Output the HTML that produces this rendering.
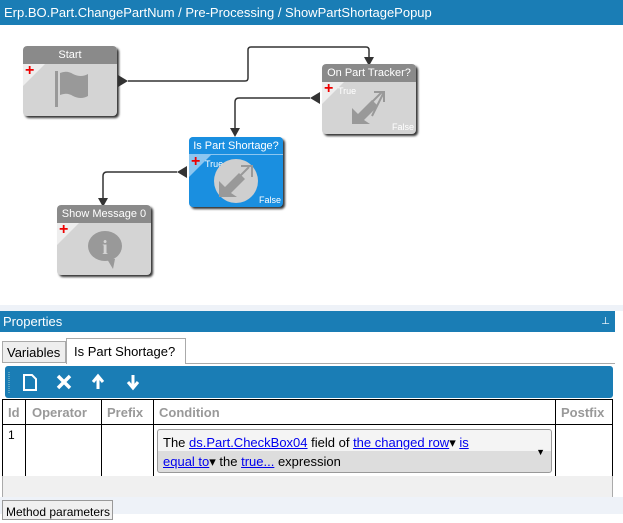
<!DOCTYPE html>
<html><head><style>
*{margin:0;padding:0;box-sizing:border-box}
body{width:623px;height:514px;overflow:hidden;background:#fff;font-family:"Liberation Sans",sans-serif;position:relative}
.abs{position:absolute}
.title{left:0;top:0;width:623px;height:25px;background:#1a7db5;color:#fff;font-size:13px;line-height:25px;padding-left:4px}
.node{position:absolute;width:94px;height:70px;background:#d4d4d4;border-radius:4px;box-shadow:2px 2px 2px #333;overflow:hidden}
.node .h{height:18px;background:#8a8a8a;color:#fff;font-size:11px;text-align:center;line-height:18px;border-radius:4px 4px 0 0;white-space:nowrap}
.node .tri{position:absolute;left:0;top:18px;width:0;height:0;border-top:22px solid #eee;border-right:22px solid transparent}
.plus{position:absolute;left:2px;top:18px;color:#e00;font-weight:bold;font-size:16px;line-height:14px}
.lbl{position:absolute;color:#fff;font-size:9px}
.blue{background:#1a8fe0}
.blue .h{background:#1a8fe0;border-bottom:1px solid #8cc6f0}
a{color:#00e;text-decoration:underline}
td,th{border:1px solid #000;font-size:13px}
</style></head><body>
<div class="abs title">Erp.BO.Part.ChangePartNum / Pre-Processing / ShowPartShortagePopup</div>
<svg class="abs" style="left:0;top:25px" width="623" height="280">
<g fill="none" stroke="#333" stroke-width="1.5">
<path d="M128 56 H245 Q248 56 248 53 V25 Q248 22 251 22 H366 Q369 22 369 25 V32"/>
<path d="M310 73 H239 Q235 73 235 77 V103"/>
<path d="M177 147 H107 Q103 147 103 151 V173"/>
</g>
<g fill="#333">
<path d="M118 50 L128 56 L118 62Z"/>
<path d="M364 32 L374 32 L369 41Z"/>
<path d="M320 67 L310 73 L320 79Z"/>
<path d="M230 103 L240 103 L235 112Z"/>
<path d="M187 141 L177 147 L187 153Z"/>
<path d="M98 173 L108 173 L103 182Z"/>
</g>
</svg>
<div class="node" style="left:23px;top:46px"><div class="h">Start</div><div class="tri"></div><div class="plus">+</div>
<svg class="abs" style="left:28px;top:24px" width="40" height="42"><rect x="4" y="1" width="3" height="36" fill="#999"/><path d="M9 3 Q16 0 22 4 Q30 8 37 4 V26 Q30 30 22 26 Q16 22 9 25Z" fill="#999"/></svg></div>
<div class="node" style="left:322px;top:64px"><div class="h">On Part Tracker?</div><div class="tri"></div><div class="plus">+</div><div class="lbl" style="left:16px;top:22px">True</div><div class="lbl" style="right:2px;bottom:2px">False</div>
<svg class="abs" style="left:28px;top:26px" width="40" height="38"><path d="M2 34 L2 18 L8 24 L22 10 L28 16 L14 30 L20 34Z" fill="#999"/><path d="M20 14 L32 2 M24 2 H34 V12 M34 2 L22 26" fill="none" stroke="#999" stroke-width="2"/></svg></div>
<div class="node blue" style="left:189px;top:137px"><div class="h">Is Part Shortage?</div><div class="tri" style="border-top-color:#8cc6f0"></div><div class="plus">+</div><div class="lbl" style="left:16px;top:22px">True</div><div class="lbl" style="right:2px;bottom:2px">False</div>
<div class="abs" style="left:25px;top:22px;width:44px;height:44px;border-radius:50%;background:#cfcfcf"></div>
<svg class="abs" style="left:28px;top:26px" width="40" height="38"><path d="M2 34 L2 18 L8 24 L22 10 L28 16 L14 30 L20 34Z" fill="#999"/><path d="M20 16 L32 4 M24 3 H35 V14" fill="none" stroke="#999" stroke-width="2"/></svg></div>
<div class="node" style="left:57px;top:205px"><div class="h">Show Message 0</div><div class="tri"></div><div class="plus">+</div>
<svg class="abs" style="left:28px;top:24px" width="40" height="42"><ellipse cx="20" cy="17" rx="17" ry="15" fill="#999"/><path d="M22 30 L28 40 L30 30Z" fill="#999"/><text x="20" y="25" font-family="Liberation Serif" font-size="20" fill="#d4d4d4" text-anchor="middle" font-weight="bold">i</text></svg></div>
<div class="abs" style="left:0;top:305px;width:623px;height:6px;background:#eef2f8"></div>
<div class="abs" style="left:0;top:311px;width:615px;height:21px;background:#1a7db5;color:#fff;font-size:13px;line-height:21px;padding-left:3px">Properties<span style="position:absolute;right:5px;font-size:10px">⊥</span></div>
<div class="abs" style="left:0;top:332px;width:615px;height:182px;background:#fff"></div>
<div class="abs" style="left:2px;top:341px;width:64px;height:22px;border:1px solid #aaa;background:#eee;font-size:13px;line-height:21px;padding-left:4px;white-space:nowrap">Variables</div>
<div class="abs" style="left:66px;top:338px;width:120px;height:26px;border:1px solid #aaa;border-bottom:none;background:#fff;font-size:13px;line-height:25px;padding-left:7px;white-space:nowrap">Is Part Shortage?</div>
<div class="abs" style="left:186px;top:363px;width:429px;height:1px;background:#aaa"></div>
<div class="abs" style="left:5px;top:366px;width:608px;height:32px;background:#1a7db5;border-radius:3px"></div>
<svg class="abs" style="left:5px;top:366px" width="160" height="32">
<path d="M4 6 V28" stroke="#9cc" stroke-dasharray="1 1"/>
<path d="M19 9 H27 L31 13 V24 H19Z" fill="none" stroke="#fff" stroke-width="2"/>
<path d="M53 10 L65 22 M65 10 L53 22" stroke="#fff" stroke-width="3.5"/>
<path d="M93 23 V12 M88 16 L93 10 L98 16" stroke="#fff" stroke-width="3" fill="none"/>
<path d="M128 9 V20 M123 16 L128 22 L133 16" stroke="#fff" stroke-width="3" fill="none"/>
</svg>
<table class="abs" style="left:2px;top:399px;width:611px;border-collapse:collapse;background:#fff">
<tr style="height:25px;color:#999;font-weight:bold;text-align:left"><th style="width:23px;padding-left:5px">Id</th><th style="width:76px;padding-left:6px">Operator</th><th style="width:52px;padding-left:5px">Prefix</th><th style="padding-left:5px">Condition</th><th style="width:57px;padding-left:5px">Postfix</th></tr>
<tr style="height:52px;vertical-align:top"><td style="padding:3px 5px;font-size:12px">1</td><td></td><td></td>
<td style="padding:4px 3px"><div style="border:1px solid #999;border-radius:3px;background:linear-gradient(#f4f4f4 50%,#ddd 50%);height:44px;padding:3px 5px;font-size:13px;line-height:19px;position:relative">The <a>ds.Part.CheckBox04</a> field of <a>the changed row</a>▾ <a>is</a><br><a>equal to</a>▾ the <a>true...</a> expression<span style="position:absolute;right:6px;top:13px;font-size:9px">▼</span></div></td><td></td></tr>
</table>
<div class="abs" style="left:2px;top:476px;width:611px;height:21px;background:#f0f0f0;border-left:1px solid #aaa;border-right:1px solid #aaa"></div>
<div class="abs" style="left:0;top:497px;width:623px;height:17px;background:#eef2f8"></div>
<div class="abs" style="left:2px;top:500px;width:111px;height:20px;border:1px solid #999;background:#f0f0f0;font-size:12px;padding-left:3px;line-height:22px">Method parameters</div>
</body></html>
